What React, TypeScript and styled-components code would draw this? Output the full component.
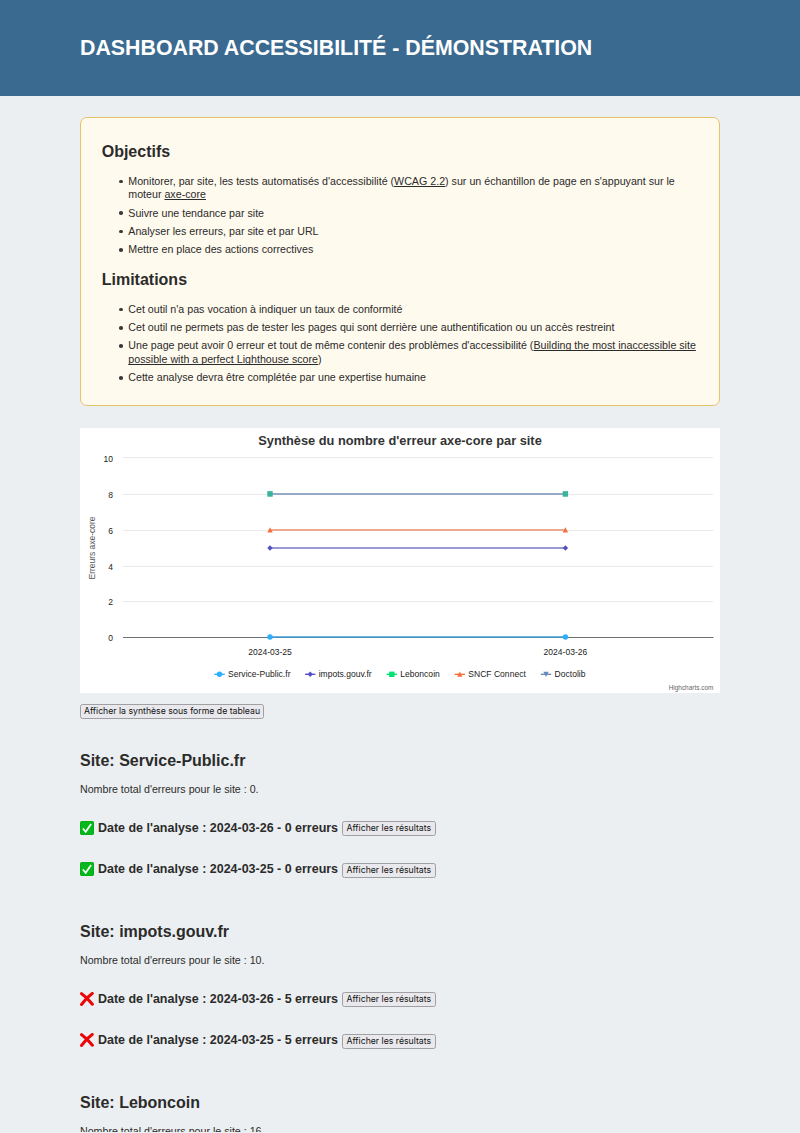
import React from "react";
import styled, { createGlobalStyle } from "styled-components";

const GlobalStyle = createGlobalStyle`
  body {
    margin: 0;
    height: 1133px;
    overflow: hidden;
    background: #ebeff1;
    color: #2b2b2b;
    font-family: "Liberation Sans", Arial, sans-serif;
    font-size: 10.667px;
    line-height: 13.333px;
  }
`;

const Header = styled.header`
  box-sizing: border-box;
  height: 96px;
  padding: 35px 80px 0;
  background: #3a6a90;
`;

const PageTitle = styled.h1`
  margin: 0;
  color: #fff;
  font-size: 21.35px;
  line-height: 27px;
  text-transform: uppercase;
  white-space: nowrap;
`;

const Main = styled.main`
  width: 640px;
  height: 1015px;
  margin: 21.3px auto 0;
  overflow: hidden;
`;

const Notice = styled.section`
  box-sizing: border-box;
  height: 288.7px;
  padding: 23.6px 20.7px 0;
  border: 1px solid #e5c468;
  border-radius: 7px;
  background: #fffaee;
`;

const Heading = styled.h2`
  margin: 0;
  font-size: 16px;
  line-height: 20px;
`;

const List = styled.ul<{ $last?: boolean }>`
  margin: 13px 0 ${(p) => (p.$last ? 0 : 13.3)}px;
  padding: 0 0 0 26.6px;
  list-style: none;
`;

const Item = styled.li`
  margin-bottom: 5px;
  letter-spacing: 0.004px;
  &:last-child {
    margin-bottom: 0;
  }
  &::before {
    content: "";
    display: inline-block;
    width: 3.6px;
    height: 3.6px;
    margin: 0 5.2px 0 -8.8px;
    border-radius: 50%;
    background: #3a3a38;
    vertical-align: 1.6px;
  }
`;

const Link = styled.a`
  color: inherit;
  text-decoration: underline 1px;
  text-underline-offset: 1px;
  text-decoration-skip-ink: none;
`;

const ChartPanel = styled.figure`
  height: 265px;
  margin: 22px 0 11px;
  background: #fff;
`;

const ChartSvg = styled.svg`
  display: block;
  font-family: "Liberation Sans", Helvetica, sans-serif;
`;

const Button = styled.button<{ $width: number }>`
  box-sizing: border-box;
  display: block;
  flex: none;
  width: ${(p) => p.$width}px;
  height: 15px;
  padding: 0;
  border: 1px solid #a0a0a3;
  border-radius: 2.5px;
  background: #e9e9ed;
  color: #111;
  font: 8.7px/13px Inter, sans-serif;
  white-space: nowrap;
`;

const Site = styled.section`
  height: 171px;
`;

const Total = styled.p`
  margin: 11.8px 0 0;
`;

const Analysis = styled.div<{ $first?: boolean }>`
  display: flex;
  align-items: center;
  height: 16px;
  margin-top: ${(p) => (p.$first ? 23.3 : 25.8)}px;

  ${Button} {
    margin-top: 1.6px;
  }
`;

const AnalysisTitle = styled.h3`
  width: 244px;
  margin: 0 0 0 4px;
  font-size: 12.48px;
  line-height: 16px;
  white-space: nowrap;
`;

const StatusSvg = styled.svg`
  display: block;
  flex: none;
`;

const Sites = styled.div`
  padding-top: 32.2px;
`;

function Status({ ok }: { ok: boolean }) {
  return ok ? (
    <StatusSvg width="14" height="14" viewBox="0 0 14 14">
      <rect width="14" height="14" rx="1.8" fill="#08a414" />
      <rect x=".6" y=".6" width="12.8" height="12.8" rx="1.4" fill="#07b81c" />
      <path d="M2.9 7.5 5.7 10.8 11.1 3" fill="none" stroke="#fff" strokeWidth="1.7" />
    </StatusSvg>
  ) : (
    <StatusSvg width="14" height="14" viewBox="0 0 14 14">
      <path
        d="M1.6 1.7Q6 4.8 12.4 12.2M12.2 1.5Q6.5 5.4 1.6 12.4"
        fill="none"
        stroke="#ea0606"
        strokeWidth="3.1"
        strokeLinecap="round"
      />
    </StatusSvg>
  );
}

type Shape = "circle" | "diamond" | "square" | "triangle" | "down";

function Marker({ shape, x, y, color }: { shape: Shape; x: number; y: number; color: string }) {
  const paths: Record<Exclude<Shape, "circle">, string> = {
    diamond: "M0-2.7 2.7 0 0 2.7-2.7 0Z",
    square: "M-2.7-2.7H2.7V2.7H-2.7Z",
    triangle: "M0-2.7 2.7 2.5H-2.7Z",
    down: "M-2.7-2.5H2.7L0 2.7Z",
  };
  return shape === "circle" ? (
    <circle cx={x} cy={y} r="2.7" fill={color} />
  ) : (
    <path d={paths[shape]} transform={`translate(${x} ${y})`} fill={color} />
  );
}

const series: { name: string; y: number; color: string; line: string; shape: Shape; x: number; w: number }[] = [
  { name: "Service-Public.fr", y: 209, color: "#2caffe", line: "#3d9fd6", shape: "circle", x: 139.5, w: 62.5 },
  { name: "impots.gouv.fr", y: 120, color: "#544fc5", line: "#7a76c4", shape: "diamond", x: 230.2, w: 53 },
  { name: "Leboncoin", y: 66, color: "#00e272", line: "#8ea5c4", shape: "square", x: 311.8, w: 39.5 },
  { name: "SNCF Connect", y: 102, color: "#f4713f", line: "#e8916c", shape: "triangle", x: 379.8, w: 57.5 },
  { name: "Doctolib", y: 66, color: "#6b8abc", line: "#8ea5c4", shape: "down", x: 466, w: 31 },
];

const ticks = [
  [10, 29.5],
  [8, 66.5],
  [6, 102.5],
  [4, 138.5],
  [2, 173.5],
  [0, 209.5],
];

function Chart() {
  return (
    <ChartSvg width="640" height="265" viewBox="0 0 640 265">
      <text x="320" y="17" textAnchor="middle" fontSize="12.8" fontWeight="700" fill="#333" textLength="283.5">
        Synthèse du nombre d'erreur axe-core par site
      </text>
      {ticks.map(([value, y]) => (
        <g key={value}>
          <path d={`M43 ${y}H633.5`} stroke={value ? "#ebebeb" : "#6b7075"} />
          <text x="33" y={y === 29.5 ? 34 : y + 3.6} textAnchor="end" fontSize="8.53" fill="#222">
            {value}
          </text>
        </g>
      ))}
      <text
        transform="translate(15.3 120) rotate(-90)"
        textAnchor="middle"
        fontSize="8.53"
        fill="#555"
        textLength="63"
      >
        Erreurs axe-core
      </text>
      {series.map((s) => (
        <g key={s.name}>
          <path d={`M190 ${s.y}H485.4`} stroke={s.line} strokeWidth="1.6" />
          <path d={`M${s.x - 5.2} 246.3h10.4`} stroke={s.color} strokeWidth="1.35" />
          <Marker shape={s.shape} x={s.x} y={246.3} color={s.color} />
          <text x={s.x + 8.5} y="249.2" fontSize="8.53" fill="#222" textLength={s.w}>
            {s.name}
          </text>
        </g>
      ))}
      {series.map((s) => {
        const color = s.y === 66 ? "#3bb39c" : s.color;
        return (
          <g key={s.name}>
            <Marker shape={s.shape} x={190} y={s.y} color={color} />
            <Marker shape={s.shape} x={485.4} y={s.y} color={color} />
          </g>
        );
      })}
      <text x="190" y="227.2" textAnchor="middle" fontSize="8.53" fill="#222" textLength="43.6">
        2024-03-25
      </text>
      <text x="485.4" y="227.2" textAnchor="middle" fontSize="8.53" fill="#222" textLength="43.6">
        2024-03-26
      </text>
      <text x="633.3" y="262.4" textAnchor="end" fontSize="6.4" fill="#666" textLength="44.6">
        Highcharts.com
      </text>
    </ChartSvg>
  );
}

const sites = [
  { name: "Service-Public.fr", total: 0, each: 0, dates: ["2024-03-26", "2024-03-25"] },
  { name: "impots.gouv.fr", total: 10, each: 5, dates: ["2024-03-26", "2024-03-25"] },
  { name: "Leboncoin", total: 16, each: 8, dates: [] },
];

export default function App() {
  return (
    <>
      <GlobalStyle />
      <Header>
        <PageTitle>Dashboard accessibilité - Démonstration</PageTitle>
      </Header>
      <Main>
        <Notice>
          <Heading>Objectifs</Heading>
          <List>
            <Item>
              Monitorer, par site, les tests automatisés d'accessibilité (<Link>WCAG 2.2</Link>) sur un échantillon de
              page en s'appuyant sur le moteur <Link>axe-core</Link>
            </Item>
            <Item>Suivre une tendance par site</Item>
            <Item>Analyser les erreurs, par site et par URL</Item>
            <Item>Mettre en place des actions correctives</Item>
          </List>
          <Heading>Limitations</Heading>
          <List $last>
            <Item>Cet outil n'a pas vocation à indiquer un taux de conformité</Item>
            <Item>
              Cet outil ne permets pas de tester les pages qui sont derrière une authentification ou un accès restreint
            </Item>
            <Item>
              Une page peut avoir 0 erreur et tout de même contenir des problèmes d'accessibilité (
              <Link>Building the most inaccessible site possible with a perfect Lighthouse score</Link>)
            </Item>
            <Item>Cette analyse devra être complétée par une expertise humaine</Item>
          </List>
        </Notice>
        <ChartPanel>
          <Chart />
        </ChartPanel>
        <Button $width={184}>Afficher la synthèse sous forme de tableau</Button>
        <Sites>
          {sites.map((site) => (
            <Site key={site.name}>
              <Heading>Site: {site.name}</Heading>
              <Total>Nombre total d'erreurs pour le site : {site.total}.</Total>
              {site.dates.map((date, i) => (
                <Analysis key={date} $first={i === 0}>
                  <Status ok={site.each === 0} />
                  <AnalysisTitle>
                    Date de l'analyse : {date} - {site.each} erreurs
                  </AnalysisTitle>
                  <Button $width={93.5}>Afficher les résultats</Button>
                </Analysis>
              ))}
            </Site>
          ))}
        </Sites>
      </Main>
    </>
  );
}
